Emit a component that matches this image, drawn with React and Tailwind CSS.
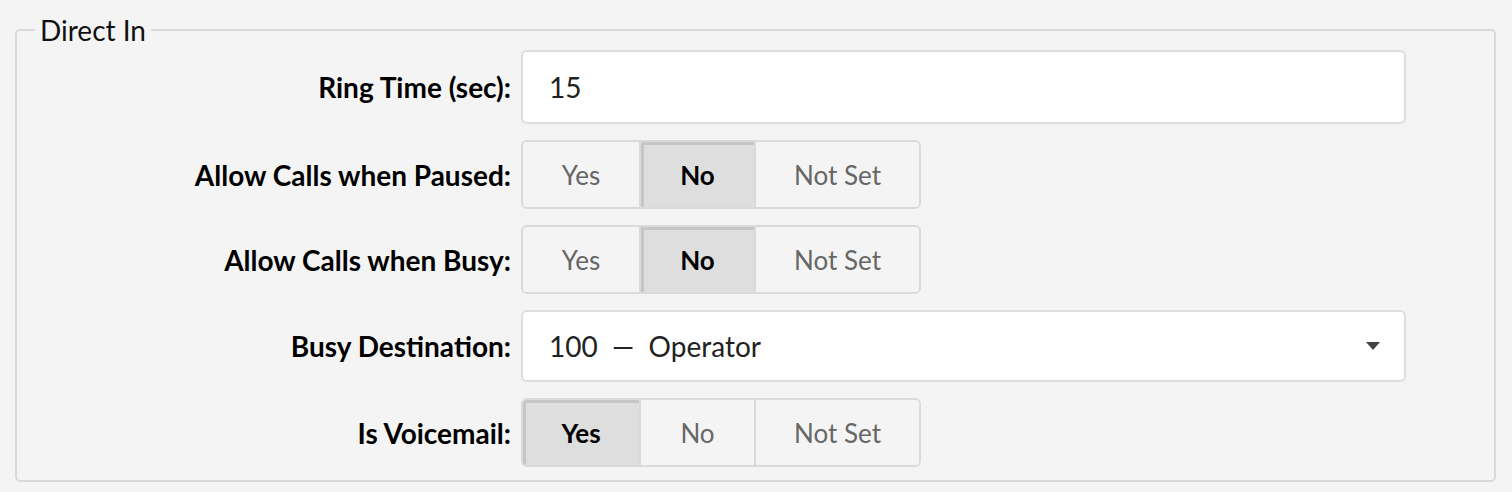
import React from 'react';

const Toggle = ({ value }) => {
  const opts = [
    { label: 'Yes', w: 'w-[116px]' },
    { label: 'No', w: 'w-[115px]' },
    { label: 'Not Set', w: 'w-[166px]' },
  ];
  return (
    <div className="flex h-[69px] w-[400px] rounded-[6px] border-2 border-[#dadada] overflow-hidden">
      {opts.map((o, i) => {
        const active = o.label === value;
        return (
          <div
            key={o.label}
            className={`${o.w} ${i > 0 ? 'border-l-2 border-[#dadada]' : ''} ${
              i === 2 ? 'flex-1' : ''
            } flex items-center justify-center pt-[2px] text-[26px] ${
              active
                ? 'bg-[#dedede] text-black font-bold shadow-[inset_3px_3px_0_#c6c6c6]'
                : 'bg-[#f4f4f4] text-[#666]'
            }`}
          >
            {o.label}
          </div>
        );
      })}
    </div>
  );
};

const Row = ({ label, children }) => (
  <div className="flex items-center">
    <div className="w-[504px] pr-[10px] text-right text-[28px] font-bold text-black">{label}</div>
    {children}
  </div>
);

export default function App() {
  return (
    <div className="min-h-screen bg-[#f4f4f4] pl-[15px] pr-[16px] pt-[16px]" style={{ fontFamily: 'Lato, "Noto Sans", sans-serif' }}>
      <fieldset className="border-2 border-[#d9d9d9] rounded-[5px] pb-[13px] pt-[6px]">
        <legend className="ml-[18px] px-[5px] text-[28px] leading-[28px] text-[#111]">Direct In</legend>
        <div className="flex flex-col gap-[16px]">
          <Row label="Ring Time (sec):">
            <div className="w-[885px] h-[74px] bg-white border-2 border-[#dedede] rounded-[6px] flex items-center pl-[26px] text-[28px] text-[#222]">
              15
            </div>
          </Row>
          <Row label="Allow Calls when Paused:">
            <Toggle value="No" />
          </Row>
          <Row label="Allow Calls when Busy:">
            <Toggle value="No" />
          </Row>
          <Row label="Busy Destination:">
            <div className="w-[885px] h-[72px] bg-white border-2 border-[#dedede] rounded-[6px] flex items-center justify-between pl-[26px] pr-[24px] text-[28px] text-[#222]">
              <span className="whitespace-pre">100  —  Operator</span>
              <svg width="14" height="8" viewBox="0 0 14 8">
                <path d="M0 0 H14 L7 8 Z" fill="#444" />
              </svg>
            </div>
          </Row>
          <Row label="Is Voicemail:">
            <Toggle value="Yes" />
          </Row>
        </div>
      </fieldset>
    </div>
  );
}
